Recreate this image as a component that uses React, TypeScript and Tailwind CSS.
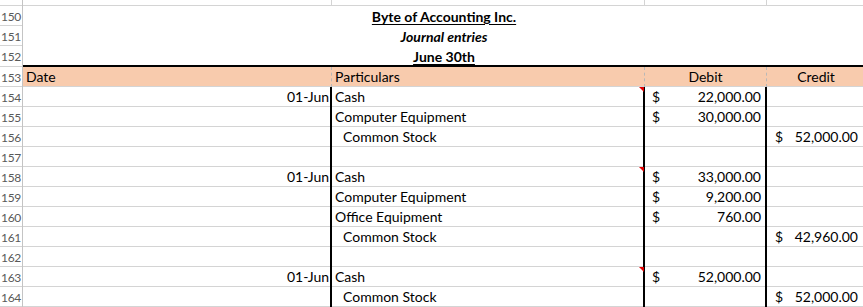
import React from "react";

type Row = {
  n: number;
  date?: string;
  part?: string;
  indent?: boolean;
  debit?: string;
  credit?: string;
  tri?: boolean;
};

const rows: Row[] = [
  { n: 154, date: "01-Jun", part: "Cash", debit: "22,000.00", tri: true },
  { n: 155, part: "Computer Equipment", debit: "30,000.00" },
  { n: 156, part: "Common Stock", indent: true, credit: "52,000.00" },
  { n: 157 },
  { n: 158, date: "01-Jun", part: "Cash", debit: "33,000.00", tri: true },
  { n: 159, part: "Computer Equipment", debit: "9,200.00" },
  { n: 160, part: "Office Equipment", debit: "760.00" },
  { n: 161, part: "Common Stock", indent: true, credit: "42,960.00" },
  { n: 162 },
  { n: 163, date: "01-Jun", part: "Cash", debit: "52,000.00", tri: true },
  { n: 164, part: "Common Stock", indent: true, credit: "52,000.00" },
];

const grid = "shadow-[inset_0_-1px_0_#d4d4d4]";

function RowHead({ n, h = "h-[20px]" }: { n: number | string; h?: string }) {
  return (
    <div
      className={`${h} w-[23px] shrink-0 border-r border-[#c4c4c4] ${grid} pl-[1px] pt-[1px] text-[12px] tracking-[-0.3px] leading-[19px] text-[#595959] overflow-hidden whitespace-nowrap`}
    >
      {n}
    </div>
  );
}

function Money({ v }: { v?: string }) {
  if (!v) return null;
  return (
    <div className="flex w-full justify-between">
      <span>$</span>
      <span>{v}</span>
    </div>
  );
}

function TitleRow({
  n,
  children,
  last,
}: {
  n: number;
  children?: React.ReactNode;
  last?: boolean;
}) {
  return (
    <div className="flex">
      <RowHead n={n} h={last ? "h-[21px]" : "h-[20px]"} />
      <div
        className={`flex flex-1 ${last ? "h-[21px] border-b-2 border-black" : "h-[20px]"}`}
      >
        <div className="w-[309px] shrink-0" />
        <div className="w-[224px] shrink-0 text-center font-bold leading-[19px] pt-[1px] whitespace-nowrap">
          {children}
        </div>
      </div>
    </div>
  );
}

export default function App() {
  return (
    <div className="w-[863px] h-[307px] overflow-hidden bg-white text-black font-[Lato,'Open_Sans',sans-serif] text-[14px]">
      {/* partial row 149 */}
      <div className="flex h-[6px]">
        <div className={`h-[6px] w-[23px] shrink-0 border-r border-[#c4c4c4] ${grid}`} />
        <div className={`w-[309px] shrink-0 border-r border-[#d4d4d4] ${grid}`} />
        <div className={`w-[313px] shrink-0 border-r border-[#d4d4d4] ${grid}`} />
        <div className={`w-[122px] shrink-0 border-r border-[#d4d4d4] ${grid}`} />
        <div className={`flex-1 ${grid}`} />
      </div>

      <TitleRow n={150}>
        <span className="underline underline-offset-2">Byte of Accounting Inc.</span>
      </TitleRow>
      <TitleRow n={151}>
        <span className="italic">Journal entries</span>
      </TitleRow>
      <TitleRow n={152} last>
        <span className="underline underline-offset-2">June 30th</span>
      </TitleRow>

      {/* header row 153 */}
      <div className="flex h-[20px]">
        <RowHead n={153} />
        <div className={`flex flex-1 bg-[#f8cbad] ${grid} leading-[19px]`}>
          <div className="w-[309px] shrink-0 border-r border-dashed border-[#b8b8b8] pl-[3px]">
            Date
          </div>
          <div className="w-[313px] shrink-0 border-r border-dashed border-[#b8b8b8] pl-[3px]">
            Particulars
          </div>
          <div className="w-[122px] shrink-0 border-r border-dashed border-[#b8b8b8] text-center">
            Debit
          </div>
          <div className="w-[98px] shrink-0 text-center">Credit</div>
        </div>
      </div>

      {rows.map((r) => (
        <div key={r.n} className="flex h-[20px] leading-[19px]">
          <RowHead n={r.n} />
          <div className={`w-[309px] shrink-0 border-r-2 border-black ${grid} pr-[1px] text-right`}>
            {r.date}
          </div>
          <div
            className={`relative w-[313px] shrink-0 border-r-2 border-black ${grid} ${
              r.indent ? "pl-[11px]" : "pl-[3px]"
            }`}
          >
            {r.part}
            {r.tri && (
              <div className="absolute top-0 right-[-1px] h-0 w-0 border-t-[5px] border-l-[5px] border-t-[#e00000] border-l-transparent" />
            )}
          </div>
          <div className={`w-[122px] shrink-0 border-r-2 border-black ${grid} pl-[7px] pr-[4px]`}>
            <Money v={r.debit} />
          </div>
          <div className={`w-[96px] shrink-0 ${grid} pl-[8px] pr-[5px]`}>
            <Money v={r.credit} />
          </div>
          <div className={`flex-1 ${grid}`} />
        </div>
      ))}
    </div>
  );
}
